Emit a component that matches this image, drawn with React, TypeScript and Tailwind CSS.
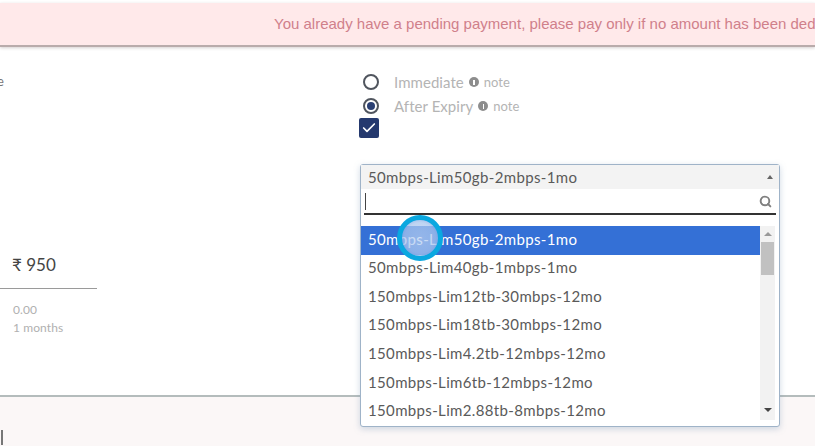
import React from 'react';
import { Check, Search } from 'lucide-react';

const plans = [
  '50mbps-Lim50gb-2mbps-1mo',
  '50mbps-Lim40gb-1mbps-1mo',
  '150mbps-Lim12tb-30mbps-12mo',
  '150mbps-Lim18tb-30mbps-12mo',
  '150mbps-Lim4.2tb-12mbps-12mo',
  '150mbps-Lim6tb-12mbps-12mo',
  '150mbps-Lim2.88tb-8mbps-12mo',
];

const Note = ({ label, checked }: { label: string; checked?: boolean }) => (
  <div className="flex h-6 items-center">
    <span className="flex h-4 w-4 items-center justify-center rounded-full border-2 border-[#50555e]">
      {checked && <span className="h-2 w-2 rounded-full bg-[#2a3f73]" />}
    </span>
    <span className="ml-[15px] text-[15px] tracking-[0.05px] text-[#b4b4b4]">{label}</span>
    <span className="ml-[5px] flex h-[10px] w-[10px] items-center justify-center rounded-full bg-[#8d8d8d]">
      <span className="h-[5px] w-[1.5px] bg-white" />
    </span>
    <span className="ml-[5px] mt-[2px] text-[13px] text-[#b4b4b4]">note</span>
  </div>
);

export default function App() {
  return (
    <div className="relative flex h-[446px] w-[815px] flex-col overflow-hidden bg-white font-['Lato',sans-serif]">
      <div className="mt-[3px] flex h-[44px] shrink-0 items-center overflow-hidden whitespace-nowrap border-b-2 border-[#b9abab] bg-[#ffe9ea] pl-[274px] font-['Liberation_Sans',sans-serif] text-[15px] text-[#d0808a] shadow-[0_1px_3px_rgba(120,100,100,0.3)]">
        You already have a pending payment, please pay only if no amount has been deducted
      </div>

      <div className="flex min-h-0 flex-1">
        <div className="w-[363px] shrink-0 pt-[28px]">
          <div className="-ml-[3px] text-[13px] leading-none text-[#777]">e</div>
          <div className="ml-[12px] mt-[165px] text-[17px] leading-6 text-[#444]">₹ 950</div>
          <div className="mt-[11px] h-px w-[97px] bg-[#9a9a9a]" />
          <div className="ml-[13px] mt-[12px] text-[12px] leading-[18px] tracking-[0.1px] text-[#b0b0b0]">
            <div>0.00</div>
            <div>1 months</div>
          </div>
        </div>

        <div className="pt-[23px]">
          <Note label="Immediate" />
          <Note label="After Expiry" checked />
          <span className="ml-[-4px] flex h-5 w-5 items-center justify-center rounded-[2px] bg-[#25396e]">
            <Check className="h-4 w-4 text-white" strokeWidth={2.5} />
          </span>
        </div>
      </div>

      <div className="h-[51px] shrink-0 border-t-2 border-[#b4bcbc] bg-[#fbf7f7] pt-[33px]">
        <div className="ml-px h-[15px] w-[2px] bg-[#777]" />
      </div>

      {/* open dropdown sits over the footer */}
      <div className="absolute left-[360px] top-[164px] w-[420px] rounded-[3px] border border-[#9fb3c8] bg-white text-[15px] tracking-[0.35px] text-[#5a5a5a] shadow-[0_2px_6px_rgba(120,150,180,0.35)]">
        <div className="flex h-[24px] items-center justify-between bg-[#f3f3f3] pl-[7px] pr-[4px]">
          <span>50mbps-Lim50gb-2mbps-1mo</span>
          <span className="mr-[2px] h-0 w-0 border-x-[3px] border-b-[4px] border-x-transparent border-b-[#666]" />
        </div>
        <div className="mx-[3px] mt-[1px] flex h-[25px] items-center justify-between border-b-2 border-[#333] pl-px pr-[4px]">
          <span className="h-[17px] w-px bg-[#444]" />
          <Search className="h-[13px] w-[13px] text-[#808080]" strokeWidth={3.5} />
        </div>
        <div className="mt-[11px] flex pr-[4px]">
          <div className="flex-1">
            {plans.map((p, i) => (
              <div
                key={p}
                className={`flex h-[28.6px] items-center pb-[3px] pl-[7px] ${i === 0 ? 'bg-[#3470d6] text-white' : ''}`}
              >
                {p}
              </div>
            ))}
          </div>
          <div className="flex h-[194px] w-[15px] flex-col items-center bg-[#f2f2f2]">
            <span className="mt-[6px] h-0 w-0 border-x-[4px] border-b-[4px] border-x-transparent border-b-[#999]" />
            <div className="mt-[6px] h-[33px] w-[13px] bg-[#c1c1c1]" />
            <span className="mb-[8px] mt-auto h-0 w-0 border-x-[4px] border-t-[4px] border-x-transparent border-t-[#444]" />
          </div>
        </div>
      </div>

      {/* touch marker from the recording */}
      <div className="absolute left-[397px] top-[215px] h-[46px] w-[46px] rounded-full border-[5px] border-[#0aa8e0] bg-[radial-gradient(circle,rgba(190,212,242,0.7)_0%,rgba(170,198,238,0.75)_60%,rgba(105,150,225,0.9)_100%)]" />
    </div>
  );
}
